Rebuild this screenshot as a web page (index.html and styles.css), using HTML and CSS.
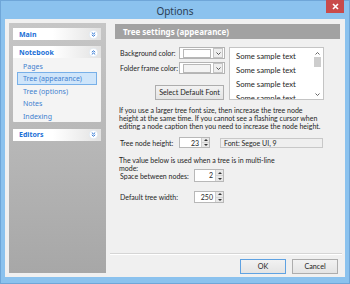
FILE: index.html
```html
<!DOCTYPE html>
<html lang="en">
<head>
    <meta charset="UTF-8">
    <meta name="viewport" content="width=device-width, initial-scale=1.0">
    <title>Options</title>
    <link rel="stylesheet" href="styles.css">
</head>
<body>
    <div class="window">
        <div class="titlebar">
            <span></span>
            <span class="title">Options</span>
            <button class="close" title="Close">
                <svg width="7" height="7" viewBox="0 0 7 7"><path d="M1 1 L6 6 M6 1 L1 6" stroke="#fff" stroke-width="1.6"/></svg>
            </button>
        </div>

        <div class="client">
            <!-- left navigation -->
            <div class="sidebar">
                <div class="group">
                    <div class="group-head">
                        <span>Main</span>
                        <svg class="toggle" width="9" height="9" viewBox="0 0 9 9"><circle cx="4.5" cy="4.5" r="4.2" fill="#fff" stroke="#d8e4f0" stroke-width="0.6"/><path d="M2.8 2.6 L4.5 4 L6.2 2.6 M2.8 4.8 L4.5 6.2 L6.2 4.8" fill="none" stroke="#2a74d4" stroke-width="1"/></svg>
                    </div>
                </div>
                <div class="group open">
                    <div class="group-head">
                        <span>Notebook</span>
                        <svg class="toggle" width="9" height="9" viewBox="0 0 9 9"><circle cx="4.5" cy="4.5" r="4.2" fill="#fff" stroke="#d8e4f0" stroke-width="0.6"/><path d="M2.8 4.2 L4.5 2.8 L6.2 4.2 M2.8 6.4 L4.5 5 L6.2 6.4" fill="none" stroke="#2a74d4" stroke-width="1"/></svg>
                    </div>
                    <ul class="group-items">
                        <li>Pages</li>
                        <li class="active">Tree (appearance)</li>
                        <li>Tree (options)</li>
                        <li>Notes</li>
                        <li>Indexing</li>
                    </ul>
                </div>
                <div class="group">
                    <div class="group-head">
                        <span>Editors</span>
                        <svg class="toggle" width="9" height="9" viewBox="0 0 9 9"><circle cx="4.5" cy="4.5" r="4.2" fill="#fff" stroke="#d8e4f0" stroke-width="0.6"/><path d="M2.8 2.6 L4.5 4 L6.2 2.6 M2.8 4.8 L4.5 6.2 L6.2 4.8" fill="none" stroke="#2a74d4" stroke-width="1"/></svg>
                    </div>
                </div>
            </div>

            <!-- settings page -->
            <div class="main">
                <div class="section-head">Tree settings (appearance)</div>

                <div class="top-row">
                    <div class="colors">
                        <div class="field">
                            <label>Background color:</label>
                            <div class="color-combo"><span class="swatch"></span><span class="drop"><svg width="5" height="3" viewBox="0 0 5 3"><path d="M0.5 0.5 L2.5 2.5 L4.5 0.5" fill="none" stroke="#444" stroke-width="0.9"/></svg></span></div>
                        </div>
                        <div class="field">
                            <label>Folder frame color:</label>
                            <div class="color-combo"><span class="swatch frame"></span><span class="drop"><svg width="5" height="3" viewBox="0 0 5 3"><path d="M0.5 0.5 L2.5 2.5 L4.5 0.5" fill="none" stroke="#444" stroke-width="0.9"/></svg></span></div>
                        </div>
                        <button class="btn font-btn">Select Default Font</button>
                    </div>
                    <div class="listbox">
                        <div class="list-items">
                            <div>Some sample text</div>
                            <div>Some sample text</div>
                            <div>Some sample text</div>
                            <div>Some sample text</div>
                        </div>
                        <div class="scrollbar">
                            <svg width="5" height="3" viewBox="0 0 5 3"><path d="M0.5 2.5 L2.5 0.5 L4.5 2.5" fill="none" stroke="#555" stroke-width="0.9"/></svg>
                            <span class="thumb"></span>
                            <span class="track"></span>
                            <svg width="5" height="3" viewBox="0 0 5 3"><path d="M0.5 0.5 L2.5 2.5 L4.5 0.5" fill="none" stroke="#555" stroke-width="0.9"/></svg>
                        </div>
                    </div>
                </div>

                <p class="note">If you use a larger tree font size, then increase the tree node<br>height at the same time. If you cannot see a flashing cursor when<br>editing a node caption then you need to increase the node height.</p>

                <div class="row">
                    <label class="w59">Tree node height:</label>
                    <div class="spin w31"><span class="val">23</span><span class="arrows"><i class="up"></i><i class="down"></i></span></div>
                    <div class="font-box">Font: Segoe UI, 9</div>
                </div>

                <p class="note small">The value below is used when a tree is in multi-line<br>mode:</p>
                <div class="row tight">
                    <label class="w74">Space between nodes:</label>
                    <div class="spin w30"><span class="val">2</span><span class="arrows"><i class="up"></i><i class="down"></i></span></div>
                </div>

                <div class="row gap">
                    <label class="w74">Default tree width:</label>
                    <div class="spin w30"><span class="val">250</span><span class="arrows"><i class="up"></i><i class="down"></i></span></div>
                </div>

                <div class="spacer"></div>
                <div class="separator"></div>
                <div class="buttons">
                    <button class="btn default">OK</button>
                    <button class="btn">Cancel</button>
                </div>
            </div>
        </div>
    </div>
</body>
</html>
```

FILE: styles.css
```css
body {
    margin: 0;
    font-family: 'Lato', 'Liberation Sans', sans-serif;
    font-size: 7px;
    color: #1e1e1e;
}

label {
    white-space: nowrap;
    flex-shrink: 0;
}

.window {
    width: 350px;
    height: 284px;
    box-sizing: border-box;
    background: #8bc2ee;
    border: 1px solid #6fa6d8;
    display: flex;
    flex-direction: column;
}

.titlebar {
    height: 18px;
    display: grid;
    grid-template-columns: 1fr auto 1fr;
    align-items: start;
}

.title {
    font-family: 'Noto Sans', sans-serif;
    font-size: 10px;
    color: #2b3e55;
    margin-top: 3px;
}

.close {
    justify-self: end;
    width: 18px;
    height: 13px;
    margin: -1px 5px 0 0;
    padding: 0;
    border: none;
    background: #c94b4b;
    display: flex;
    align-items: center;
    justify-content: center;
}

.client {
    flex: 1;
    margin: 0 4px 6px 4px;
    background: #f0f0f0;
    display: flex;
}

/* sidebar */

.sidebar {
    width: 97px;
    margin: 4px 0 4px 4px;
    background: linear-gradient(to bottom, #c6c6c6, #a7a7a7);
    display: flex;
    flex-direction: column;
    gap: 6px;
    padding: 5px 5px 0 4px;
    box-sizing: border-box;
}

.group {
    background: #f4f4f4;
    border-radius: 1px;
}

.group.open {
    margin-bottom: 1px;
}

.group-head {
    height: 12px;
    display: flex;
    align-items: center;
    justify-content: space-between;
    padding: 0 3px 0 6px;
    background: linear-gradient(to right, #fff 45%, #e2e2e2);
    color: #1b6fd6;
    font-family: 'Noto Sans', sans-serif;
    font-weight: bold;
    font-size: 7px;
}

.group-items {
    list-style: none;
    margin: 0;
    padding: 2px 4px 0 4px;
    font-family: 'Noto Sans', sans-serif;
    font-size: 7px;
}

.group-items li {
    height: 12.4px;
    line-height: 11px;
    padding-left: 5px;
    color: #3f80cf;
    box-sizing: border-box;
    border: 1px solid transparent;
}

.group-items li.active {
    background: #cfe5fa;
    border-color: #78b0e8;
}

/* main page */

.main {
    flex: 1;
    margin-left: 4px;
    margin-right: 3px;
    display: flex;
    flex-direction: column;
}

.section-head {
    height: 15px;
    margin: 5px 2px 0 5px;
    background: #a2a2a2;
    color: #fff;
    font-family: 'Noto Sans', sans-serif;
    font-weight: bold;
    font-size: 8px;
    line-height: 15px;
    padding-left: 8px;
}

.top-row {
    display: flex;
    gap: 4px;
    margin: 8px 0 0 10px;
}

.colors {
    display: flex;
    flex-direction: column;
    gap: 3px;
}

.field {
    display: flex;
    align-items: center;
}

.field label {
    width: 59px;
}

.color-combo {
    width: 46px;
    height: 12px;
    box-sizing: border-box;
    border: 1px solid #b4b4b4;
    background: #fff;
    display: flex;
    align-items: center;
    padding: 0 1px 0 3px;
    gap: 2px;
}

.swatch {
    flex: 1;
    height: 7px;
    border: 1px solid #b8b8b8;
    background: #fff;
}

.swatch.frame {
    background: #f3f3f3;
}

.drop {
    width: 8px;
    height: 8px;
    border: 1px solid #c4c4c4;
    background: #eee;
    display: flex;
    align-items: center;
    justify-content: center;
}

.btn {
    font-family: inherit;
    font-size: 7.2px;
    color: #1e1e1e;
    background: linear-gradient(to bottom, #f2f2f2, #e4e4e4);
    border: 1px solid #adadad;
    padding: 0;
    height: 15px;
}

.font-btn {
    width: 69px;
    margin: 8px 0 0 35px;
}

.listbox {
    width: 95px;
    height: 53px;
    box-sizing: border-box;
    border: 1px solid #c4c4c4;
    background: #fff;
    display: flex;
    overflow: hidden;
}

.list-items {
    flex: 1;
    padding: 2px 0 0 6px;
    font-size: 7.7px;
}

.list-items div {
    height: 14px;
    line-height: 12px;
}

.scrollbar {
    width: 9px;
    margin-right: 1px;
    display: flex;
    flex-direction: column;
    align-items: center;
    padding: 4px 0 3px;
    gap: 2px;
}

.thumb {
    width: 7px;
    height: 10px;
    background: #cdcdcd;
}

.track {
    flex: 1;
}

.note {
    margin: 6px 0 0 9px;
    line-height: 8px;
    white-space: nowrap;
}

.note.small {
    margin-top: 9px;
    line-height: 7.5px;
}

.row {
    display: flex;
    align-items: center;
    margin: 7px 0 0 10px;
    height: 11px;
}

.row.tight {
    margin-top: -3px;
    height: 13px;
}

.row.gap {
    margin-top: 9px;
    height: 12px;
}

.w59 { width: 59px; }
.w74 { width: 74px; }

.spin {
    height: 100%;
    box-sizing: border-box;
    border: 1px solid #b8b8b8;
    background: #fff;
    display: flex;
}

.w31 { width: 31px; }
.w30 { width: 30px; }

.spin .val {
    flex: 1;
    text-align: right;
    padding-right: 2px;
    line-height: 10px;
}

.arrows {
    width: 7px;
    display: flex;
    flex-direction: column;
    background: #e8e8e8;
    border-left: 1px solid #cfcfcf;
}

.arrows i {
    flex: 1;
    display: flex;
    align-items: center;
    justify-content: center;
}

.arrows i::after {
    content: "";
    border-left: 2px solid transparent;
    border-right: 2px solid transparent;
}

.arrows .up::after {
    border-bottom: 2px solid #333;
}

.arrows .down {
    border-top: 1px solid #d4d4d4;
}

.arrows .down::after {
    border-top: 2px solid #333;
}

.font-box {
    margin-left: 10px;
    width: 103px;
    height: 10px;
    box-sizing: border-box;
    border: 1px solid #c8c8c8;
    background: #efefef;
    line-height: 8px;
    padding-left: 3px;
}

.spacer {
    flex: 1;
}

.separator {
    border-top: 1px solid #d5d5d5;
    border-bottom: 1px solid #fff;
}

.buttons {
    display: flex;
    justify-content: flex-end;
    gap: 6px;
    margin: 4px 4px 3px 0;
}

.buttons .btn {
    width: 46px;
}

.buttons .btn.default {
    border-color: #5fa2e2;
}
```
